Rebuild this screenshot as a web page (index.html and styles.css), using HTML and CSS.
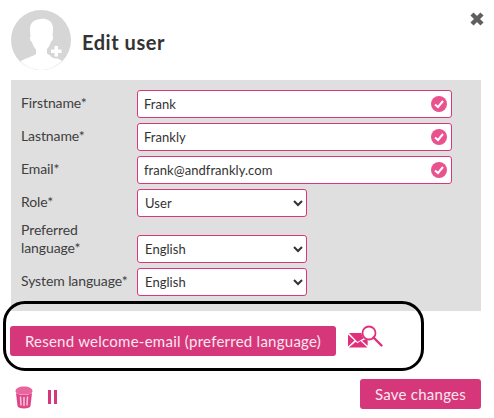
FILE: index.html
```html
<!DOCTYPE html>
<html lang="en">
<head>
<meta charset="utf-8">
<title>Edit user</title>
<link rel="stylesheet" href="styles.css">
</head>
<body>
<div class="dialog">
  <svg class="close" viewBox="0 0 16 16" aria-label="Close"><path d="M3 3 13 13M13 3 3 13"/></svg>
  <header class="head">
    <svg class="avatar" viewBox="0 0 60 60">
      <circle cx="30" cy="30" r="30" fill="#d6d6d6"/>
      <path fill="#fff" d="M30 9c-6.500 0-10.500 3.500-11 9-.2 3 .2 5.500.5 8 .2 1-.8 1-.6 2.500.3 1.800 1 3 2.100 3.500.8 3 2.200 5.500 4 7.500v4.500c-3 2.500-11 4-15.500 7.500C14.500 56 22 60 30 60c8 0 15.500-4 21-9 -4.500-3.500-12-5-15-7.500V39c1.800-2 3.200-4.500 4-7.500 1.100-.5 1.800-1.700 2.100-3.500.2-1.500-.8-1.500-.6-2.500.3-2.500.7-5 .5-8-.5-5.500-4.500-9-11-9z"/>
      <circle cx="45" cy="41" r="7.500" fill="#d6d6d6"/>
      <path fill="#fff" d="M43.500 36h3.500v3.500h3.500V43H47v3.500h-3.500V43H40v-3.500h3.500z"/>
    </svg>
    <h1 class="title">Edit user</h1>
  </header>

  <form class="panel">
    <label class="row">
      <span class="label">Firstname*</span>
      <span class="field">
        <input class="control wide" type="text" value="Frank">
        <svg class="check" viewBox="0 0 16 16"><circle cx="8" cy="8" r="8"/><path d="M4 8.500 7 11 12 5"/></svg>
      </span>
    </label>
    <label class="row">
      <span class="label">Lastname*</span>
      <span class="field">
        <input class="control wide" type="text" value="Frankly">
        <svg class="check" viewBox="0 0 16 16"><circle cx="8" cy="8" r="8"/><path d="M4 8.500 7 11 12 5"/></svg>
      </span>
    </label>
    <label class="row">
      <span class="label">Email*</span>
      <span class="field">
        <input class="control wide" type="text" value="frank@andfrankly.com">
        <svg class="check" viewBox="0 0 16 16"><circle cx="8" cy="8" r="8"/><path d="M4 8.500 7 11 12 5"/></svg>
      </span>
    </label>
    <label class="row">
      <span class="label">Role*</span>
      <span class="field"><select class="control narrow"><option>User</option></select></span>
    </label>
    <label class="row row-tall">
      <span class="label label-tall">Preferred language*</span>
      <span class="field"><select class="control narrow"><option>English</option></select></span>
    </label>
    <label class="row">
      <span class="label">System language*</span>
      <span class="field"><select class="control narrow"><option>English</option></select></span>
    </label>
  </form>

  <section class="resend">
    <button class="btn btn-resend" type="button">Resend welcome-email (preferred language)</button>
    <svg class="mail-search" viewBox="0 0 36 24">
      <path class="fill" d="M1 8h12.500c.2 2 1 3.800 2.300 5.200L9.500 17 1 8zM0 9.500l6.500 6L0 21.500v-12zM7.800 16.700l1.700 1.500 3-2.100 7 6.400H.8l7-5.800zM17.300 14.300c.8.500 1.500.8 2.400 1v5.500l-5.700-5 3.300-1.500z"/>
      <circle class="ring" cx="21" cy="8" r="6.500"/>
      <path class="handle" d="M25.500 12.500 33.500 20.500"/>
    </svg>
    <span class="oval"></span>
  </section>

  <footer class="foot">
    <div class="tools">
      <svg class="trash" viewBox="0 0 20 24">
        <path class="lid" d="M1.500 6c0-2.500 3.500-4.500 8.500-4.500s8.500 2 8.500 4.500-3.500 3.500-8.500 3.500S1.500 8.500 1.500 6z"/>
        <path class="can" d="M2 8 3.500 21c.2 1.500 2.800 2.500 6.500 2.500s6.300-1 6.500-2.500L18 8c-2 1.300-4.800 1.800-8 1.800S4 9.300 2 8z"/>
        <path class="ribs" d="M6.500 11.500 7 20.500M10 12v9M13.500 11.500 13 20.500"/>
      </svg>
      <span class="pause"></span>
    </div>
    <button class="btn btn-save" type="button">Save changes</button>
  </footer>
</div>
</body>
</html>
```

FILE: styles.css
```css
* { box-sizing: border-box; }

html, body { margin: 0; background: #fff; }

body {
  font-family: "Lato", "Open Sans", sans-serif;
  color: #3a3a3a;
  width: 494px;
  height: 418px;
  overflow: hidden;
}

.dialog {
  position: relative;
  padding: 10px 13px 0 11px;
}

.close {
  position: absolute;
  left: 469px;
  top: 11px;
  width: 16px;
  height: 16px;
}
.close path { stroke: #5f5f5f; stroke-width: 4.4px; fill: none; }

.head {
  display: flex;
  align-items: center;
  gap: 11px;
  height: 60px;
}

.avatar { width: 60px; height: 60px; flex: none; }

.title {
  margin: 4px 0 0;
  font-size: 20px;
  font-weight: 700;
  color: #333;
  letter-spacing: .55px;
}

.panel {
  margin-top: 10px;
  background: #dfdfdf;
  padding: 10px;
  height: 231px;
  display: flex;
  flex-direction: column;
  gap: 5px;
}

.row {
  display: flex;
  align-items: center;
  height: 28px;
}
.row-tall { height: 41px; align-items: flex-start; }
.row-tall .field { margin-top: 13px; }

.label {
  width: 116px;
  flex: none;
  font-size: 14px;
  line-height: 18px;
  color: #404040;
  letter-spacing: -.1px;
  position: relative;
  top: -1px;
}
.label-tall { padding-right: 20px; }

.field { position: relative; display: block; height: 28px; }

.control {
  display: block;
  height: 28px;
  border: 1px solid #d9377b;
  border-radius: 3px;
  background: #fff;
  font-family: inherit;
  font-size: 13px;
  letter-spacing: .05px;
  color: #333;
  outline: none;
}
.wide { width: 315px; padding: 0 6px; }
.narrow { width: 170px; padding: 0 3px; }

.check {
  position: absolute;
  right: 5px;
  top: 6px;
  width: 16px;
  height: 16px;
}
.check circle { fill: #e9528f; }
.check path { stroke: #fff; stroke-width: 2px; fill: none; }

.resend {
  position: relative;
  margin: 15px 0 0 -1px;
  height: 30px;
  display: flex;
  align-items: center;
  gap: 12px;
}

.btn {
  border: 0;
  border-radius: 3px;
  background: #d6377a;
  color: #fbe7ef;
  font-family: inherit;
  font-size: 15px;
  letter-spacing: .25px;
  height: 30px;
  padding: 0;
}
.btn-resend { width: 326px; }
.btn-save { width: 121px; }

.mail-search { width: 36px; height: 24px; margin-top: -9px; }
.mail-search .fill { fill: #e0307c; }
.mail-search .ring { fill: none; stroke: #e0307c; stroke-width: 1.800px; }
.mail-search .handle { stroke: #e0307c; stroke-width: 2.400px; stroke-linecap: round; fill: none; }

.oval {
  position: absolute;
  left: -7px;
  top: -25px;
  width: 421px;
  height: 70px;
  border: 3px solid #000;
  border-radius: 22px;
  pointer-events: none;
}

.foot {
  display: flex;
  justify-content: space-between;
  align-items: flex-start;
  margin-top: 23px;
}

.tools {
  display: flex;
  align-items: center;
  gap: 14px;
  margin: 6px 0 0 3px;
}

.trash { width: 20px; height: 24px; }
.trash .lid { fill: #e9659d; }
.trash .can { fill: #e0458a; }
.trash .ribs { stroke: #f7c6da; stroke-width: 1.500px; fill: none; }

.pause {
  width: 9px;
  height: 14px;
  border-left: 3px solid #d6377a;
  border-right: 3px solid #d6377a;
}
```
